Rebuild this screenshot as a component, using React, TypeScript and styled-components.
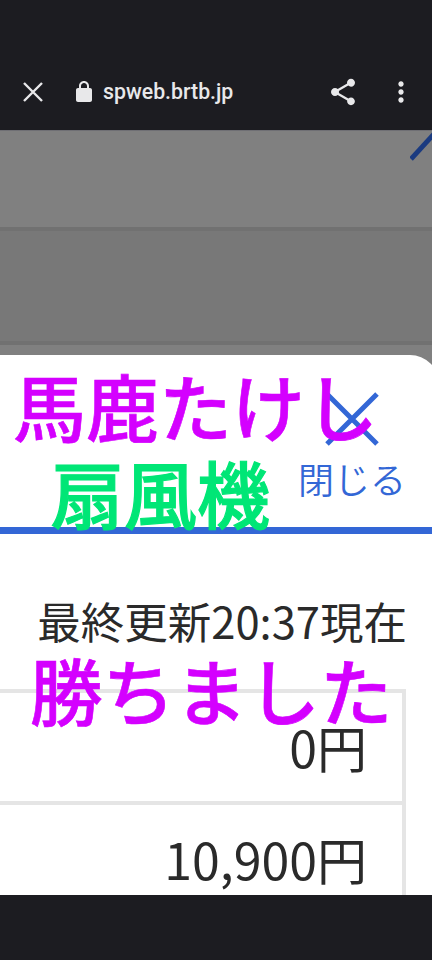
import React from "react";
import styled, { createGlobalStyle } from "styled-components";

const Global = createGlobalStyle`
  html, body { margin: 0; padding: 0; background: #1c1c21; }
  body { font-family: "Noto Sans CJK JP", "Noto Sans", sans-serif; }
`;

const Screen = styled.div`
  position: relative;
  width: 432px;
  height: 960px;
  overflow: hidden;
  display: flex;
  flex-direction: column;
  background: #1c1c21;
`;

const BrowserBar = styled.header`
  height: 130px;
  flex: none;
  box-sizing: border-box;
  padding: 72px 0 0 16px;
  display: flex;
  align-items: flex-start;
  background: #1c1c21;
  color: #e8e8ea;
`;

const IconSlot = styled.span<{ $w: number; $ml?: number }>`
  flex: none;
  width: ${(p) => p.$w}px;
  height: 40px;
  margin-left: ${(p) => p.$ml ?? 0}px;
  display: flex;
  align-items: center;
  justify-content: center;
`;

const Url = styled.span`
  font-family: Roboto, sans-serif;
  font-weight: 500;
  font-size: 21.3px;
  line-height: 40px;
  margin-left: 7px;
  width: 224px;
  white-space: nowrap;
`;

const Page = styled.div`
  flex: 1;
  min-height: 0;
  display: flex;
  flex-direction: column;
  background: #808080;
`;

const Dimmed = styled.section`
  position: relative;
  flex: none;
  height: 225px;
  display: flex;
  flex-direction: column;
  border-top: 1px solid #6f6f74;
  box-sizing: border-box;
`;

const DimRow = styled.div<{ $h: number; $bg: string }>`
  height: ${(p) => p.$h}px;
  flex: none;
  box-sizing: border-box;
  background: ${(p) => p.$bg};
  border-bottom: 4px solid #717171;
`;

const CornerStroke = styled.svg`
  position: absolute;
  right: 0;
  top: 0;
`;

const Sheet = styled.main`
  flex: 1;
  min-height: 0;
  margin-right: -7px;
  background: #fff;
  border-radius: 0 29px 0 0;
  overflow: hidden;
  display: flex;
  flex-direction: column;
`;

const SheetHeader = styled.div`
  height: 172px;
  flex: none;
  box-sizing: border-box;
  display: flex;
  flex-direction: column;
  align-items: flex-end;
  padding: 37px 35px 0 0;
`;

const CloseButton = styled.div`
  width: 104px;
  display: flex;
  flex-direction: column;
  align-items: center;
  color: #3367d6;
`;

const CloseLabel = styled.span`
  font-size: 36px;
  line-height: 40px;
  font-weight: 350;
  margin-top: 10px;
  white-space: nowrap;
`;

const Rule = styled.div`
  height: 7px;
  flex: none;
  background: #3367d6;
`;

const Updated = styled.p`
  margin: 57px 32px 0 0;
  text-align: right;
  font-size: 43.5px;
  line-height: 60px;
  font-weight: 400;
  color: #2a2a2a;
  white-space: nowrap;
`;

const Table = styled.div`
  margin: 38px 33px 0 -4px;
  border: solid #e5e5e5;
  border-width: 4px 4px 0 0;
`;

const Row = styled.div`
  height: 112px;
  box-sizing: border-box;
  border-bottom: 4px solid #e5e5e5;
  display: flex;
  justify-content: flex-end;
  padding: 18px 35px 0 0;
  font-size: 50px;
  font-weight: 400;
  line-height: 70px;
  color: #2a2a2a;
`;

const BottomBar = styled.footer`
  height: 65px;
  flex: none;
  background: #1c1c21;
`;

const Sticker = styled.div<{ $x: number; $y: number; $c: string; $size: number; $stroke: number }>`
  position: absolute;
  left: ${(p) => p.$x}px;
  top: ${(p) => p.$y}px;
  color: ${(p) => p.$c};
  font-size: ${(p) => p.$size}px;
  font-weight: 500;
  line-height: 1;
  white-space: nowrap;
  -webkit-text-stroke: ${(p) => p.$stroke}px ${(p) => p.$c};
`;

export default function App() {
  return (
    <>
      <Global />
      <Screen>
        <BrowserBar>
          <IconSlot $w={34}>
            <svg width="22" height="22" viewBox="0 0 22 22" fill="none" stroke="#e8e8ea" strokeWidth="2.4">
              <path d="M2 2l18 18M20 2L2 20" />
            </svg>
          </IconSlot>
          <IconSlot $w={24} $ml={22}>
            <svg width="24" height="24" viewBox="0 0 24 24" fill="#e8e8ea">
              <path d="M18 8h-1V6c0-2.76-2.24-5-5-5S7 3.24 7 6v2H6c-1.1 0-2 .9-2 2v10c0 1.1.9 2 2 2h12c1.1 0 2-.9 2-2V10c0-1.1-.9-2-2-2zM9 8V6c0-1.66 1.34-3 3-3s3 1.34 3 3v2H9z" />
            </svg>
          </IconSlot>
          <Url>spweb.brtb.jp</Url>
          <IconSlot $w={32}>
            <svg width="32" height="32" viewBox="0 0 24 24" fill="#e8e8ea">
              <path d="M18 16.08c-.76 0-1.44.3-1.96.77L8.91 12.7c.05-.23.09-.46.09-.7s-.04-.47-.09-.7l7.05-4.11c.54.5 1.25.81 2.04.81 1.66 0 3-1.34 3-3s-1.34-3-3-3-3 1.34-3 3c0 .24.04.47.09.7L8.04 9.81C7.5 9.31 6.79 9 6 9c-1.66 0-3 1.34-3 3s1.34 3 3 3c.79 0 1.5-.31 2.04-.81l7.12 4.16c-.05.21-.08.43-.08.65 0 1.61 1.31 2.92 2.92 2.92s2.92-1.31 2.92-2.92-1.31-2.92-2.92-2.92z" />
            </svg>
          </IconSlot>
          <IconSlot $w={32} $ml={26}>
            <svg width="32" height="32" viewBox="0 0 24 24" fill="#e8e8ea">
              <path d="M12 8c1.1 0 2-.9 2-2s-.9-2-2-2-2 .9-2 2 .9 2 2 2zm0 2c-1.1 0-2 .9-2 2s.9 2 2 2 2-.9 2-2-.9-2-2-2zm0 6c-1.1 0-2 .9-2 2s.9 2 2 2 2-.9 2-2-.9-2-2-2z" />
            </svg>
          </IconSlot>
        </BrowserBar>
        <Page>
          <Dimmed>
            <DimRow $h={100} $bg="#808080" />
            <DimRow $h={114} $bg="#787878" />
            <CornerStroke width="22" height="30" viewBox="0 0 22 30" fill="none" stroke="#1b3b80" strokeWidth="5">
              <path d="M1 28 L24 3" />
            </CornerStroke>
          </Dimmed>
          <Sheet>
            <SheetHeader>
              <CloseButton>
                <svg width="56" height="56" viewBox="0 0 56 56" fill="none" stroke="#3367d6" strokeWidth="5">
                  <path d="M3 2l50 50M53 2L3 52" />
                </svg>
                <CloseLabel>閉じる</CloseLabel>
              </CloseButton>
            </SheetHeader>
            <Rule />
            <Updated>最終更新20:37現在</Updated>
            <Table>
              <Row>0円</Row>
              <Row>10,900円</Row>
            </Table>
          </Sheet>
        </Page>
        <BottomBar />
        <Sticker $x={13} $y={368} $c="#d400ff" $size={73} $stroke={0.6}>馬鹿たけし</Sticker>
        <Sticker $x={51} $y={455} $c="#00e676" $size={73} $stroke={1.2}>扇風機</Sticker>
        <Sticker $x={30} $y={653} $c="#d400ff" $size={72.5} $stroke={0.6}>勝ちました</Sticker>
      </Screen>
    </>
  );
}
